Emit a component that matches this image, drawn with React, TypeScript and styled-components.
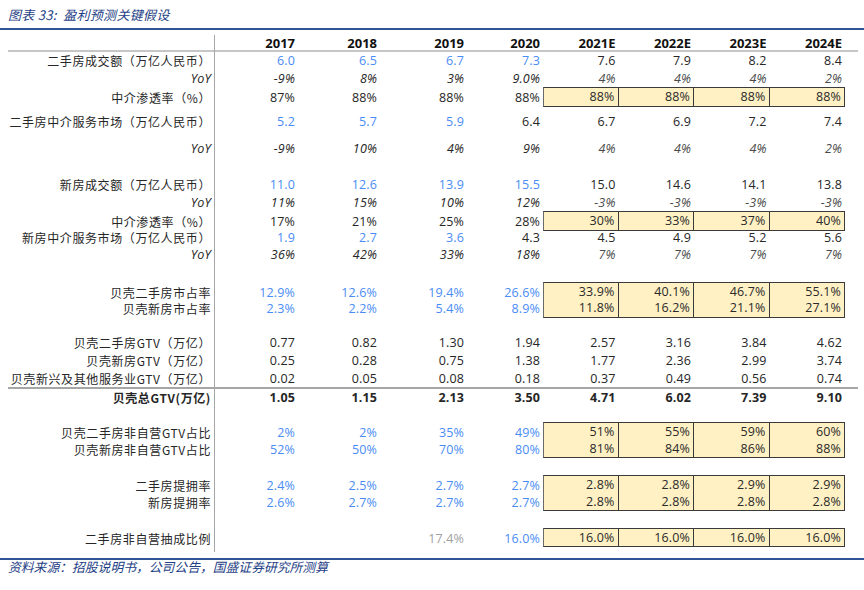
import React from "react";
import styled, { createGlobalStyle, css } from "styled-components";

const Global = createGlobalStyle`
  html, body { margin: 0; padding: 0; background: #ffffff; }
  body { font-family: "Open Sans", "Noto Sans CJK SC", sans-serif; }
`;

type Tone = "b" | "k" | "g" | "d";
type BoxKind = "single" | "top" | "bottom";

interface RowDef {
  label?: string;
  h: number;
  yoy?: boolean;
  total?: boolean;
  vals?: string[];
  tones?: string;
  box?: BoxKind;
}

const COLS = "207px 83px 82px 87px 76px 75.5px 75.5px 75.5px 75.5px 13px";

const toneColor: Record<Tone, string> = {
  b: "#4a8cf5",
  k: "#262626",
  g: "#a0a0a0",
  d: "#4a4a4a",
};

const Page = styled.div`
  width: 864px;
  height: 590px;
  background: #fff;
  overflow: hidden;
`;

const Title = styled.div`
  height: 28px;
  border-bottom: 2px solid #2f5597;
  padding-left: 8px;
  display: flex;
  align-items: center;
  font-family: "Noto Sans CJK SC", sans-serif;
  font-style: italic;
  font-size: 13px;
  color: #1f3f86;
  letter-spacing: 0.3px;
`;

const Table = styled.div`
  margin: 5px 6px 0 8px;
`;

const Row = styled.div<{ $h: number; $total?: boolean; $head?: boolean }>`
  display: grid;
  grid-template-columns: ${COLS};
  height: ${(p) => p.$h}px;
  box-sizing: border-box;
  ${(p) =>
    p.$total &&
    css`
      border-top: 2px solid #a6a6a6;
      font-weight: 700;
    `}
  ${(p) =>
    p.$head &&
    css`
      border-bottom: 2px solid #c6c6c6;
    `}
`;

const Label = styled.div<{ $yoy?: boolean; $bold?: boolean }>`
  border-right: 1px solid #a6a6a6;
  padding-right: 3px;
  display: flex;
  justify-content: flex-end;
  align-items: flex-end;
  line-height: 17.6px;
  white-space: nowrap;
  color: #262626;
  font-family: "Noto Sans CJK SC", sans-serif;
  font-size: 12px;
  letter-spacing: 0.6px;
  font-weight: ${(p) => (p.$bold ? 700 : 400)};
  ${(p) =>
    p.$yoy &&
    css`
      font-family: "Open Sans", sans-serif;
      font-style: italic;
      font-size: 12.6px;
      letter-spacing: 0.1px;
    `}
`;

const Cell = styled.div<{
  $tone: Tone;
  $italic?: boolean;
  $box?: BoxKind;
  $first?: boolean;
}>`
  display: flex;
  justify-content: flex-end;
  align-items: flex-end;
  padding-right: 3px;
  box-sizing: border-box;
  line-height: 17.6px;
  font-size: 12.5px;
  letter-spacing: 0.15px;
  font-family: "Open Sans", sans-serif;
  white-space: nowrap;
  color: ${(p) => toneColor[p.$tone]};
  font-style: ${(p) => (p.$italic ? "italic" : "normal")};
  ${(p) =>
    p.$box &&
    css`
      background: #fff1c4;
      color: #2a2a2a;
      border-right: 1px solid #3a3a3a;
      border-bottom: 1px solid #3a3a3a;
      border-top: ${p.$box === "bottom" ? "none" : "1px solid #3a3a3a"};
      border-left: ${p.$first ? "1px solid #6a6a6a" : "none"};
    `}
`;

const HeadCell = styled.div`
  display: flex;
  justify-content: flex-end;
  align-items: flex-end;
  padding-right: 3px;
  line-height: 17px;
  font-size: 13px;
  font-weight: 700;
  color: #111;
  font-family: "Open Sans", sans-serif;
`;

const Filler = styled.div``;

const Footer = styled.div`
  margin-top: 6px;
  border-top: 2px solid #2f5597;
  padding-left: 8px;
  height: 20px;
  line-height: 14px;
  font-family: "Noto Sans CJK SC", sans-serif;
  font-style: italic;
  font-size: 12.8px;
  color: #1f3f86;
`;

const YEARS = ["2017", "2018", "2019", "2020", "2021E", "2022E", "2023E", "2024E"];

const R = 17.6;

const rows: RowDef[] = [
  { label: "二手房成交额（万亿人民币）", h: R, vals: ["6.0", "6.5", "6.7", "7.3", "7.6", "7.9", "8.2", "8.4"], tones: "bbbbkkkk" },
  { label: "YoY", yoy: true, h: R, vals: ["-9%", "8%", "3%", "9.0%", "4%", "4%", "4%", "2%"], tones: "kkkkdddd" },
  { label: "中介渗透率（%）", h: R, vals: ["87%", "88%", "88%", "88%", "88%", "88%", "88%", "88%"], tones: "kkkkkkkk", box: "single" },
  { label: "二手房中介服务市场（万亿人民币）", h: 26.2, vals: ["5.2", "5.7", "5.9", "6.4", "6.7", "6.9", "7.2", "7.4"], tones: "bbbkkkkk" },
  { label: "YoY", yoy: true, h: 27, vals: ["-9%", "10%", "4%", "9%", "4%", "4%", "4%", "2%"], tones: "kkkkdddd" },
  { h: 18 },
  { label: "新房成交额（万亿人民币）", h: R, vals: ["11.0", "12.6", "13.9", "15.5", "15.0", "14.6", "14.1", "13.8"], tones: "bbbbkkkk" },
  { label: "YoY", yoy: true, h: R, vals: ["11%", "15%", "10%", "12%", "-3%", "-3%", "-3%", "-3%"], tones: "kkkkdddd" },
  { label: "中介渗透率（%）", h: R, vals: ["17%", "21%", "25%", "28%", "30%", "33%", "37%", "40%"], tones: "kkkkkkkk", box: "single" },
  { label: "新房中介服务市场（万亿人民币）", h: R, vals: ["1.9", "2.7", "3.6", "4.3", "4.5", "4.9", "5.2", "5.6"], tones: "bbbkkkkk" },
  { label: "YoY", yoy: true, h: R, vals: ["36%", "42%", "33%", "18%", "7%", "7%", "7%", "7%"], tones: "kkkkdddd" },
  { h: R },
  { label: "贝壳二手房市占率", h: R, vals: ["12.9%", "12.6%", "19.4%", "26.6%", "33.9%", "40.1%", "46.7%", "55.1%"], tones: "bbbbkkkk", box: "top" },
  { label: "贝壳新房市占率", h: R, vals: ["2.3%", "2.2%", "5.4%", "8.9%", "11.8%", "16.2%", "21.1%", "27.1%"], tones: "bbbbkkkk", box: "bottom" },
  { h: R },
  { label: "贝壳二手房GTV（万亿）", h: R, vals: ["0.77", "0.82", "1.30", "1.94", "2.57", "3.16", "3.84", "4.62"], tones: "kkkkkkkk" },
  { label: "贝壳新房GTV（万亿）", h: R, vals: ["0.25", "0.28", "0.75", "1.38", "1.77", "2.36", "2.99", "3.74"], tones: "kkkkkkkk" },
  { label: "贝壳新兴及其他服务业GTV（万亿）", h: R, vals: ["0.02", "0.05", "0.08", "0.18", "0.37", "0.49", "0.56", "0.74"], tones: "kkkkkkkk" },
  { label: "贝壳总GTV(万亿)", total: true, h: R, vals: ["1.05", "1.15", "2.13", "3.50", "4.71", "6.02", "7.39", "9.10"], tones: "kkkkkkkk" },
  { h: R },
  { label: "贝壳二手房非自营GTV占比", h: R, vals: ["2%", "2%", "35%", "49%", "51%", "55%", "59%", "60%"], tones: "bbbbkkkk", box: "top" },
  { label: "贝壳新房非自营GTV占比", h: R, vals: ["52%", "50%", "70%", "80%", "81%", "84%", "86%", "88%"], tones: "bbbbkkkk", box: "bottom" },
  { h: R },
  { label: "二手房提拥率", h: R, vals: ["2.4%", "2.5%", "2.7%", "2.7%", "2.8%", "2.8%", "2.9%", "2.9%"], tones: "bbbbkkkk", box: "top" },
  { label: "新房提拥率", h: R, vals: ["2.6%", "2.7%", "2.7%", "2.7%", "2.8%", "2.8%", "2.8%", "2.8%"], tones: "bbbbkkkk", box: "bottom" },
  { h: R },
  { label: "二手房非自营抽成比例", h: R, vals: ["", "", "17.4%", "16.0%", "16.0%", "16.0%", "16.0%", "16.0%"], tones: "kkgbkkkk", box: "single" },
  { h: 6.4 },
];

export default function App() {
  return (
    <Page>
      <Global />
      <Title>图表 33:&nbsp;&nbsp;盈利预测关键假设</Title>
      <Table>
        <Row $h={17} $head>
          <Label />
          {YEARS.map((y) => (
            <HeadCell key={y}>{y}</HeadCell>
          ))}
          <Filler />
        </Row>
        {rows.map((r, i) => (
          <Row key={i} $h={r.h} $total={r.total}>
            <Label $yoy={r.yoy} $bold={r.total}>
              {r.label ?? ""}
            </Label>
            {YEARS.map((y, j) => {
              const v = r.vals ? r.vals[j] : "";
              const tone = (r.tones ? r.tones[j] : "k") as Tone;
              const boxed = r.box && j >= 4 ? r.box : undefined;
              return (
                <Cell
                  key={y}
                  $tone={tone}
                  $italic={r.yoy}
                  $box={boxed}
                  $first={j === 4}
                >
                  {v}
                </Cell>
              );
            })}
            <Filler />
          </Row>
        ))}
      </Table>
      <Footer>资料来源：招股说明书，公司公告，国盛证券研究所测算</Footer>
    </Page>
  );
}
